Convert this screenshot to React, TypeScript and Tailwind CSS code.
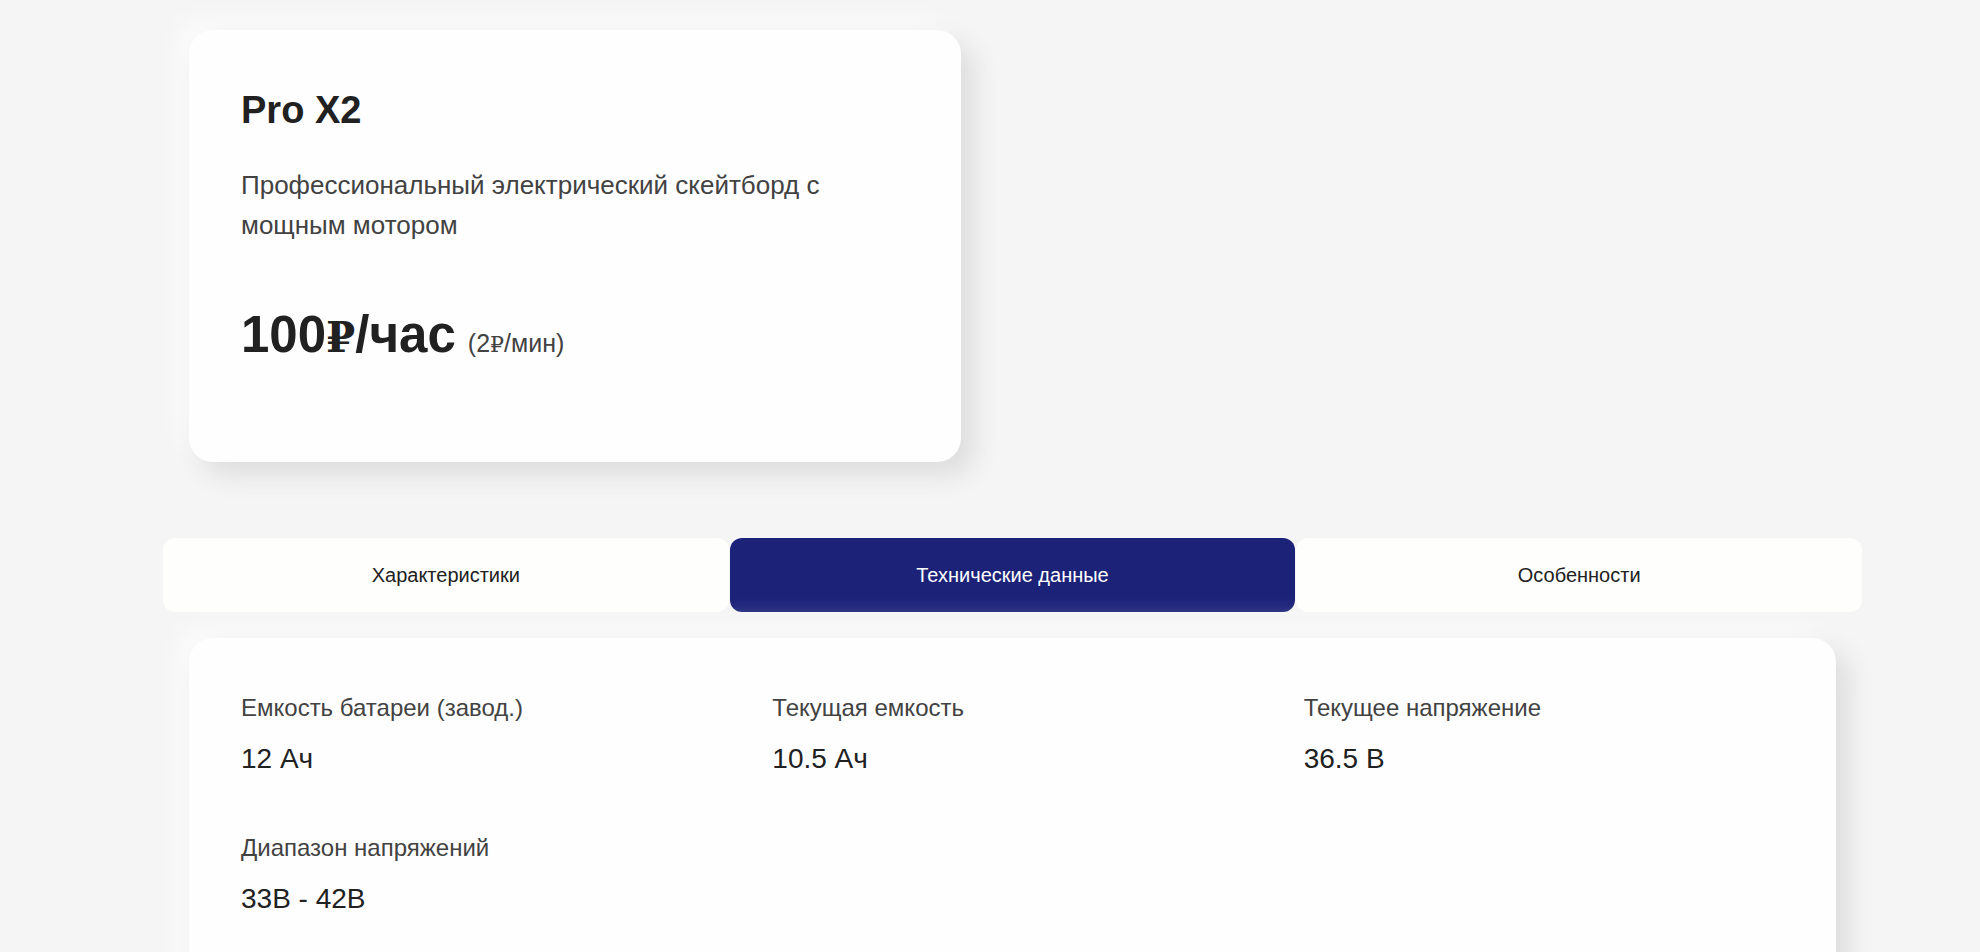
import { useState, type ReactNode } from 'react';

const tabs = ['Характеристики', 'Технические данные', 'Особенности'];

const specs = [
  { label: 'Емкость батареи (завод.)', value: '12 Ач' },
  { label: 'Текущая емкость', value: '10.5 Ач' },
  { label: 'Текущее напряжение', value: '36.5 В' },
  { label: 'Диапазон напряжений', value: '33В - 42В' },
];

function Card({ children, className = '' }: { children: ReactNode; className?: string }) {
  return (
    <section
      className={`rounded-[24px] bg-[#fefefe] px-[52px] shadow-[13px_13px_26px_#dddddd,-13px_-13px_26px_rgba(255,255,255,0.6)] ${className}`}
    >
      {children}
    </section>
  );
}

function Ruble({ className }: { className: string }) {
  return <span className={`font-['DejaVu_Serif',serif] leading-none ${className}`}>₽</span>;
}

export default function App() {
  const [active, setActive] = useState(1);

  return (
    <main className="flex h-screen flex-col overflow-x-hidden overflow-y-auto bg-[#f5f5f5] pt-[30px] pr-[118px] pl-[163px] font-['Liberation_Sans',Arial,sans-serif] text-[#212121] [scrollbar-width:none]">
      <div className="grid shrink-0 grid-cols-2 gap-[103px] px-[26px]">
        <Card className="pt-[52px] pb-[81px]">
          <h1 className="text-[38px] leading-[56px] font-bold">Pro X2</h1>
          <p className="mt-[27px] text-[26px] leading-[40px] text-[#424242]">
            Профессиональный электрический скейтборд с мощным мотором
          </p>
          <p className="mt-[52px] flex items-baseline gap-[12px] text-[51px] leading-[76px] font-bold">
            <span>
              100
              <Ruble className="text-[42px]" />
              /час
            </span>
            <span className="text-[25px] font-normal text-[#424242]">
              (2
              <Ruble className="text-[22px]" />
              /мин)
            </span>
          </p>
        </Card>
      </div>

      <div role="tablist" className="mt-[76px] grid shrink-0 grid-cols-3 gap-px">
        {tabs.map((tab, i) => (
          <button
            key={tab}
            type="button"
            role="tab"
            aria-selected={i === active}
            onClick={() => setActive(i)}
            className={`h-[74px] rounded-[12px] text-[20px] ${
              i === active ? 'bg-[#1c2278] text-white' : 'bg-[#fefffc] text-[#212121]'
            }`}
          >
            {tab}
          </button>
        ))}
      </div>

      <div className="mt-[26px] shrink-0 px-[26px] pb-[52px]">
        <Card className="pt-[52px] pb-[81px]">
          <dl className="grid grid-cols-3 gap-x-[51px] gap-y-[50px]">
            {specs.map(({ label, value }) => (
              <div key={label}>
                <dt className="text-[24px] leading-[36px] text-[#424242]">{label}</dt>
                <dd className="mt-[12px] text-[28px] leading-[42px]">{value}</dd>
              </div>
            ))}
          </dl>
        </Card>
      </div>
    </main>
  );
}
